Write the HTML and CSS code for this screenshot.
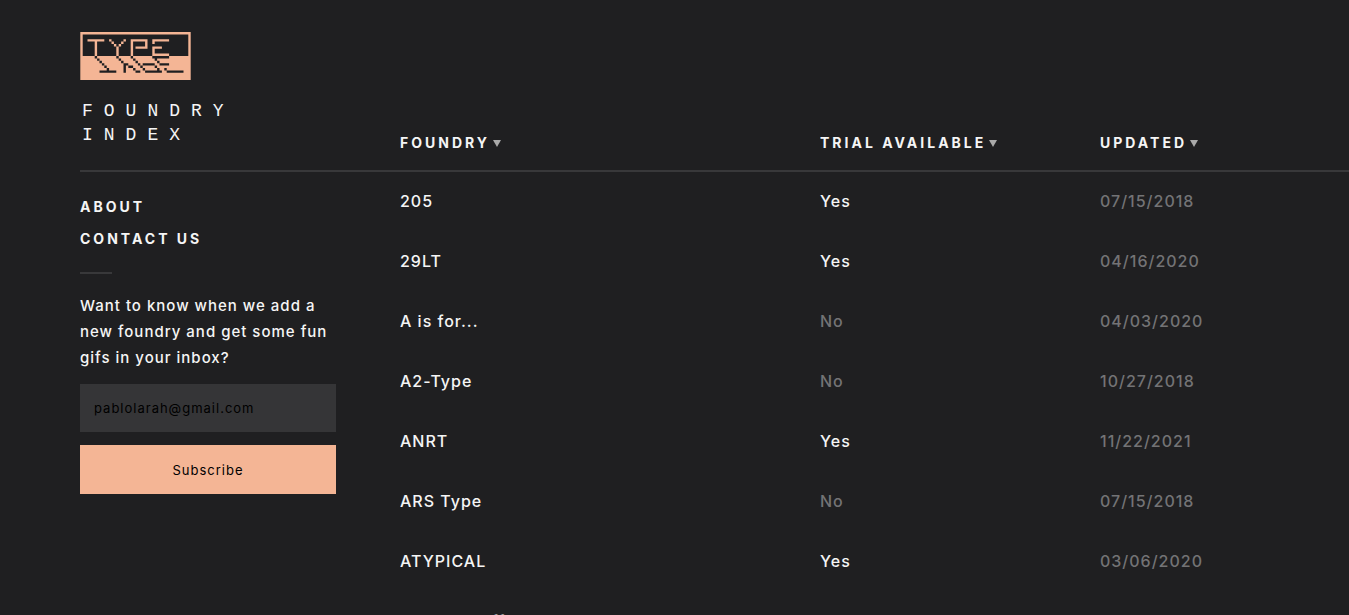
FILE: index.html
```html
<!DOCTYPE html>
<html lang="en">
<head>
<meta charset="UTF-8" />
<meta name="viewport" content="width=device-width, initial-scale=1" />
<title>Type Foundry Index</title>
<link rel="stylesheet" href="styles.css">
</head>
<body>

  <div class="page">
    <aside class="sidebar">
      <header class="brand">
        <a href="#" class="brand-link">
          <svg class="logo" viewBox="0 0 46 20" aria-hidden="true">
            <path class="logo-fill" d="M0 0h46v20H0z" />
            <path class="logo-dark" d="M1 1h44v9H1z" />
            <!-- top half -->
            <path class="logo-fill" d="M3 3h7v1H3z M6 4h1v6H6z
              M12 3h1v1h-1z M13 4h1v1h-1z M14 5h1v1h-1z M18 3h1v1h-1z M17 4h1v1h-1z M16 5h1v1h-1z M15 6h1v4h-1z
              M21 3h7v4h-5v-1h4v-2h-5v6h-1z
              M30 3h7v1h-6v1h-1z M30 6h4v1h-3v2h6v1h-7z" />
            <!-- reflection -->
            <path class="logo-dark" d="M6 10h1v1H6z M7 11h1v1H7z M8 12h1v1H8z M9 13h1v1H9z M10 14h1v1h-1z M11 15h1v1h-1z M8 16h7v1H8z
              M15 10h1v1h-1z M16 11h1v1h-1z M17 12h1v1h-1z M18 13h2v1h-1v3h-1z M20 14h2v1h-2z M22 15h1v1h-1z M23 16h2v1h-2z
              M21 10h1v1h-1z M22 11h1v1h-1z M23 12h1v1h-1z M24 13h1v1h-1z M25 14h1v1h-1z M26 15h1v1h-1z M27 16h7v1h-7z M26 13h5v1h-5z M31 14h1v1h-1z M32 15h1v1h-1z
              M30 10h7v1h-7z M31 11h1v1h-1z M32 12h1v1h-1z M33 13h4v1h-4z M35 15h1v1h-1z M36 16h7v1h-7z" />
          </svg>
          <span class="brand-name">FOUNDRY<br>INDEX</span>
        </a>
      </header>

      <nav class="nav">
        <a href="#">ABOUT</a>
        <a href="#">CONTACT US</a>
      </nav>

      <form class="signup">
        <label for="email">Want to know when we add a new foundry and get some fun gifs in your inbox?</label>
        <input type="email" id="email" value="pablolarah@gmail.com">
        <button type="submit">Subscribe</button>
      </form>
    </aside>

    <main class="list">
      <table>
        <thead>
          <tr>
            <th class="col-name"><button type="button">FOUNDRY</button></th>
            <th class="col-trial"><button type="button">TRIAL AVAILABLE</button></th>
            <th><button type="button">UPDATED</button></th>
          </tr>
        </thead>
        <tbody>
          <tr><td><a href="#">205</a></td><td>Yes</td><td class="dim">07/15/2018</td></tr>
          <tr><td><a href="#">29LT</a></td><td>Yes</td><td class="dim">04/16/2020</td></tr>
          <tr><td><a href="#">A is for...</a></td><td class="dim">No</td><td class="dim">04/03/2020</td></tr>
          <tr><td><a href="#">A2-Type</a></td><td class="dim">No</td><td class="dim">10/27/2018</td></tr>
          <tr><td><a href="#">ANRT</a></td><td>Yes</td><td class="dim">11/22/2021</td></tr>
          <tr><td><a href="#">ARS Type</a></td><td class="dim">No</td><td class="dim">07/15/2018</td></tr>
          <tr><td><a href="#">ATYPICAL</a></td><td>Yes</td><td class="dim">03/06/2020</td></tr>
          <tr><td><a href="#">Abstract Office</a></td><td>Yes</td><td class="dim">07/15/2018</td></tr>
        </tbody>
      </table>
    </main>
  </div>

</body>
</html>
```
FILE: styles.css
```css
* {
  box-sizing: border-box;
}

body {
  margin: 0;
  background: #1f1f21;
  color: #f5f5f5;
  font-family: Inter, "Liberation Sans", sans-serif;
  font-size: 16px;
  font-weight: 500;
  letter-spacing: 1px;
}

a {
  color: inherit;
  text-decoration: none;
}

.page {
  display: grid;
  grid-template-columns: 320px 1fr;
  height: 100vh;
  padding-left: 80px;
  overflow: hidden;
}

/* Sidebar */
.brand {
  height: 172px;
  padding-top: 32px;
  border-bottom: 2px solid #38383a;
}

.logo {
  display: block;
  width: 111px;
  height: 48px;
}

.logo-fill { fill: #f4b595; }
.logo-dark { fill: #1f1f21; }

.brand-name {
  display: block;
  margin-top: 19px;
  padding-left: 2px;
  font-family: "Liberation Mono", monospace;
  font-size: 18px;
  font-weight: 400;
  line-height: 24px;
  letter-spacing: 11px;
}

.nav {
  display: flex;
  flex-direction: column;
  align-items: flex-start;
  padding-top: 19px;
  font-size: 14px;
  font-weight: 700;
  line-height: 32px;
  letter-spacing: 3px;
}

.nav::after {
  content: '';
  width: 32px;
  height: 2px;
  margin-top: 17px;
  background: #38383a;
}

.signup {
  width: 256px;
  padding-top: 19px;
}

.signup label {
  display: block;
  margin-bottom: 13px;
  font-size: 15px;
  line-height: 26px;
}

.signup input,
.signup button {
  display: block;
  width: 100%;
  height: 48px;
  padding: 0 14px;
  border: 0;
  border-radius: 0;
  color: #000;
  font-family: inherit;
  font-size: 13px;
  letter-spacing: 1px;
}

.signup input {
  margin-bottom: 13px;
  background: #353537;
}

.signup button {
  height: 49px;
  background: #f4b595;
  cursor: pointer;
}

/* Foundry table */
.list {
  overflow-y: auto;
  scrollbar-width: none;
}

table {
  width: 100%;
  border-collapse: separate;
  border-spacing: 0;
  table-layout: fixed;
}

.col-name { width: 420px; }
.col-trial { width: 280px; }

th {
  position: sticky;
  top: 0;
  height: 172px;
  padding: 0 0 16px;
  border-bottom: 2px solid #38383a;
  background: #1f1f21;
  text-align: left;
  vertical-align: bottom;
}

th button {
  display: flex;
  align-items: center;
  gap: 3px;
  padding: 0;
  border: 0;
  background: none;
  color: inherit;
  font-family: inherit;
  font-size: 14px;
  font-weight: 700;
  line-height: 22px;
  letter-spacing: 3px;
  cursor: pointer;
}

/* sort arrow */
th button::after {
  content: '';
  border: 4px solid transparent;
  border-top: 7px solid #aaa;
  border-bottom: 0;
}

td {
  height: 60px;
  padding: 0 0 3px;
}

.dim {
  color: #737375;
}
```
